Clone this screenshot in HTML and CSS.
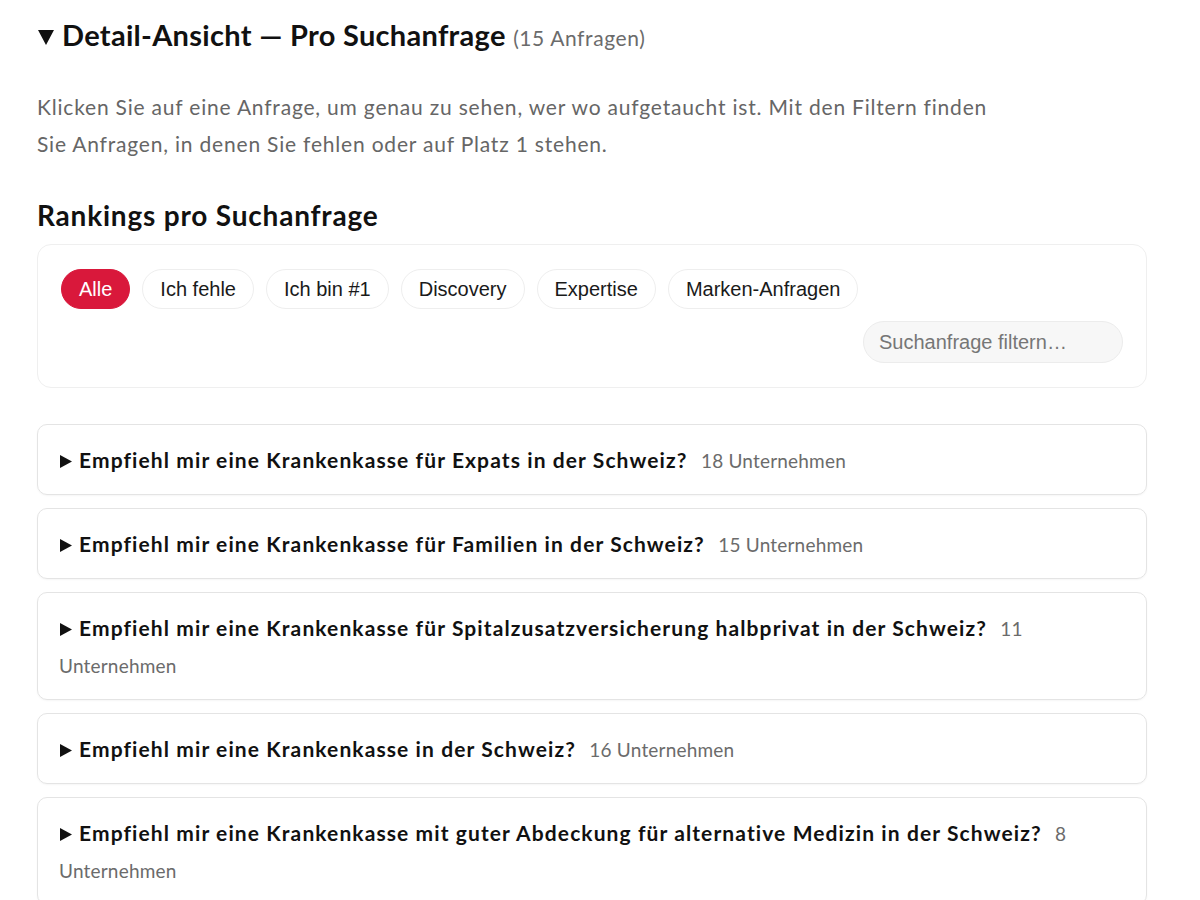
FILE: index.html
```html
<!DOCTYPE html>
<html lang="de">
<head>
<meta charset="utf-8">
<title>Detail-Ansicht</title>
<link rel="stylesheet" href="styles.css">
</head>
<body>
<details class="section" open>
  <summary class="section-summary"><span class="section-title">Detail-Ansicht — Pro Suchanfrage</span> <span class="section-count">(15 Anfragen)</span></summary>
  <p class="intro">Klicken Sie auf eine Anfrage, um genau zu sehen, wer wo aufgetaucht ist. Mit den Filtern finden Sie Anfragen, in denen Sie fehlen oder auf Platz 1 stehen.</p>
  <h3 class="sub-title">Rankings pro Suchanfrage</h3>
  <div class="filter-card">
    <button class="pill pill-active">Alle</button>
    <button class="pill">Ich fehle</button>
    <button class="pill">Ich bin #1</button>
    <button class="pill">Discovery</button>
    <button class="pill">Expertise</button>
    <button class="pill">Marken-Anfragen</button>
    <input class="search" type="text" placeholder="Suchanfrage filtern…">
  </div>
  <div class="query-list">
    <details class="query"><summary class="query-summary"><span class="query-text">Empfiehl mir eine Krankenkasse für Expats in der Schweiz?</span> <span class="query-count">18 Unternehmen</span></summary></details>
    <details class="query"><summary class="query-summary"><span class="query-text">Empfiehl mir eine Krankenkasse für Familien in der Schweiz?</span> <span class="query-count">15 Unternehmen</span></summary></details>
    <details class="query"><summary class="query-summary"><span class="query-text">Empfiehl mir eine Krankenkasse für Spitalzusatzversicherung halbprivat in der Schweiz?</span> <span class="query-count">11 Unternehmen</span></summary></details>
    <details class="query"><summary class="query-summary"><span class="query-text">Empfiehl mir eine Krankenkasse in der Schweiz?</span> <span class="query-count">16 Unternehmen</span></summary></details>
    <details class="query"><summary class="query-summary"><span class="query-text">Empfiehl mir eine Krankenkasse mit guter Abdeckung für alternative Medizin in der Schweiz?</span> <span class="query-count">8 Unternehmen</span></summary></details>
  </div>
</details>
</body>
</html>
```

FILE: styles.css
```css
html, body {
  margin: 0;
  padding: 0;
  background: #ffffff;
}

body {
  font-family: Lato, "Noto Sans", sans-serif;
  color: #111111;
  overflow: hidden;
}

.section {
  width: 1110px;
  margin: 0 0 0 37px;
  padding-top: 17px;
}

summary {
  list-style: none;
  cursor: pointer;
}

summary::-webkit-details-marker {
  display: none;
}

.section-summary {
  font-size: 29px;
  line-height: 36px;
}

.section-summary::before {
  content: "";
  display: inline-block;
  width: 16px;
  height: 15px;
  margin: 0 8px 0 1px;
  background: #111111;
  clip-path: polygon(0 0, 100% 0, 50% 100%);
  vertical-align: 1px;
}

.section-title {
  font-weight: 700;
  letter-spacing: 0.3px;
}

.section-count {
  font-size: 21px;
  letter-spacing: 0.6px;
  color: #6b6b6b;
}

.intro {
  max-width: 960px;
  margin: 32px 0 0;
  font-size: 21px;
  line-height: 37px;
  letter-spacing: 0.8px;
  color: #666666;
}

.sub-title {
  margin: 36px 0 0;
  font-size: 28px;
  line-height: 34px;
  font-weight: 700;
  letter-spacing: 0.8px;
}

.filter-card {
  margin-top: 12px;
  border: 1px solid #efefef;
  border-radius: 14px;
  padding: 24px 23px;
  display: flex;
  flex-wrap: wrap;
  gap: 12px;
  align-items: center;
}

.pill {
  font-family: "Liberation Sans", Arial, sans-serif;
  font-size: 20px;
  line-height: 22px;
  padding: 8px 17px;
  border: 1px solid #eeeeee;
  border-radius: 999px;
  background: #ffffff;
  color: #1a1a1a;
}

.pill-active {
  background: #d9183b;
  border-color: #d9183b;
  color: #ffffff;
}

.search {
  margin-left: auto;
  width: 260px;
  height: 42px;
  box-sizing: border-box;
  padding: 0 15px;
  font-family: "Liberation Sans", Arial, sans-serif;
  font-size: 20px;
  border: 1px solid #ececec;
  border-radius: 21px;
  background: #f7f7f7;
  color: #333333;
  outline: none;
}

.search::placeholder {
  color: #767676;
}

.query-list {
  margin-top: 36px;
  display: flex;
  flex-direction: column;
  gap: 13px;
}

.query {
  border: 1px solid #e4e4e4;
  border-radius: 10px;
  box-shadow: 0 1px 2px rgba(0, 0, 0, 0.04);
  padding: 16px 21px;
}

.query-summary {
  font-size: 21px;
  line-height: 37px;
}

.query-summary::before {
  content: "";
  display: inline-block;
  width: 12px;
  height: 13px;
  margin: 0 7px 0 1px;
  background: #111111;
  clip-path: polygon(0 0, 100% 50%, 0 100%);
  vertical-align: 0;
}

.query-text {
  font-weight: 700;
  letter-spacing: 1.1px;
}

.query-count {
  margin-left: 8px;
  font-size: 19px;
  line-height: 20px;
  letter-spacing: 0.2px;
  color: #6b6b6b;
}
```
